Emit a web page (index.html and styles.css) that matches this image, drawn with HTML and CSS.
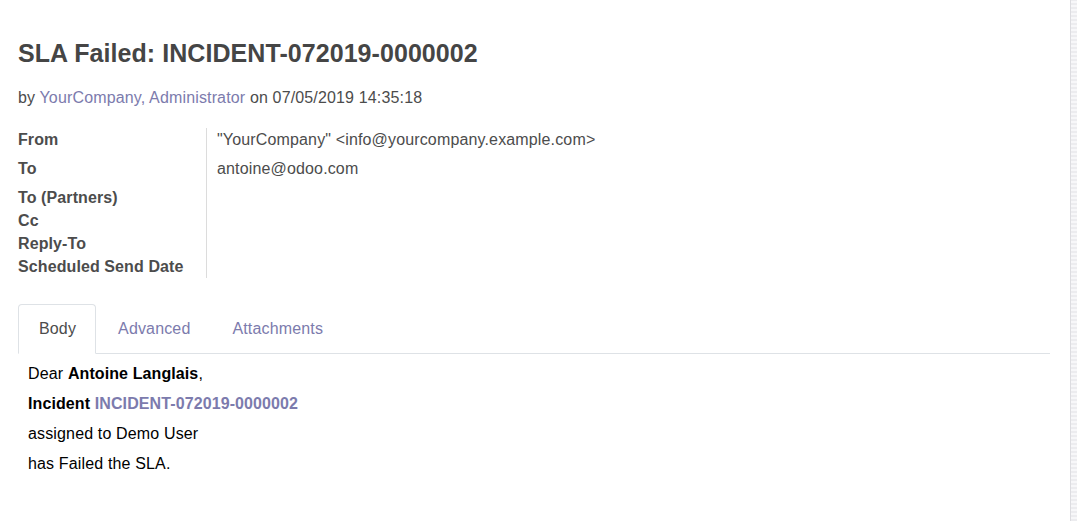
FILE: index.html
```html
<!DOCTYPE html>
<html>
<head>
<meta charset="utf-8">
<link rel="stylesheet" href="styles.css">
</head>
<body>
<div class="sheet">
  <h1 class="title">SLA Failed: INCIDENT-072019-0000002</h1>
  <div class="meta">by <a class="link">YourCompany, Administrator</a> on 07/05/2019 14:35:18</div>
  <div class="fields">
    <div class="label row-tall">From</div>
    <div class="value row-tall">"YourCompany" &lt;info@yourcompany.example.com&gt;</div>
    <div class="label row-tall">To</div>
    <div class="value row-tall">antoine@odoo.com</div>
    <div class="label">To (Partners)</div>
    <div class="value"></div>
    <div class="label">Cc</div>
    <div class="value"></div>
    <div class="label">Reply-To</div>
    <div class="value"></div>
    <div class="label">Scheduled Send Date</div>
    <div class="value"></div>
  </div>
  <div class="tabs">
    <div class="tab active">Body</div>
    <div class="tab">Advanced</div>
    <div class="tab">Attachments</div>
  </div>
  <div class="content">
    <p>Dear <b>Antoine Langlais</b>,</p>
    <p><b>Incident</b> <a class="link strong">INCIDENT-072019-0000002</a></p>
    <p>assigned to Demo User</p>
    <p>has Failed the SLA.</p>
  </div>
</div>
<div class="strip"></div>
</body>
</html>
```
FILE: styles.css
```css
html, body {
  margin: 0;
  padding: 0;
  height: 100%;
}
body {
  display: flex;
  font-family: "Liberation Sans", Arial, sans-serif;
  font-size: 16px;
  letter-spacing: 0.15px;
  color: #4c4c4c;
  background: #fff;
  overflow: hidden;
}
.sheet {
  width: 1071px;
  flex: none;
  box-sizing: border-box;
  padding: 0 20px 0 18px;
  border-right: 1px solid #dcdce0;
  background: #fff;
  height: 521px;
}
.strip {
  flex: 1;
  background: repeating-linear-gradient(0deg, #ececef 0 2px, #f7f7f9 2px 4px);
}
.title {
  margin: 38px 0 0;
  font-size: 25px;
  line-height: 30px;
  font-weight: bold;
  letter-spacing: 0.06px;
  color: #454545;
}
.meta {
  margin-top: 18px;
  line-height: 24px;
  color: #4c4c4c;
}
.link {
  color: #7c7bad;
  text-decoration: none;
}
.strong {
  font-weight: bold;
}
b, .strong {
  letter-spacing: 0.1px;
}
.fields {
  margin-top: 18px;
  display: grid;
  grid-template-columns: 189px 1fr;
  line-height: 23px;
}
.label {
  font-weight: bold;
  letter-spacing: 0.1px;
  color: #4c4c4c;
  border-right: 1px solid #dcdcdc;
  height: 23px;
}
.value {
  padding-left: 10px;
  color: #4c4c4c;
  height: 23px;
}
.row-tall {
  height: 29px;
}
.tabs {
  margin-top: 26px;
  display: flex;
  border-bottom: 1px solid #dee2e6;
}
.tab {
  padding: 12px 20px;
  line-height: 24px;
  border: 1px solid transparent;
  border-radius: 4px 4px 0 0;
  margin-bottom: -1px;
  color: #7c7bad;
}
.tab.active {
  color: #4c4c4c;
  border-color: #dee2e6 #dee2e6 #fff;
  background: #fff;
  padding: 12px 19px 12px 20px;
}
.tab.active + .tab {
  padding-left: 21px;
}
.content {
  padding: 5px 10px 0;
  color: #000;
}
.content p {
  margin: 0;
  line-height: 30px;
}
```
